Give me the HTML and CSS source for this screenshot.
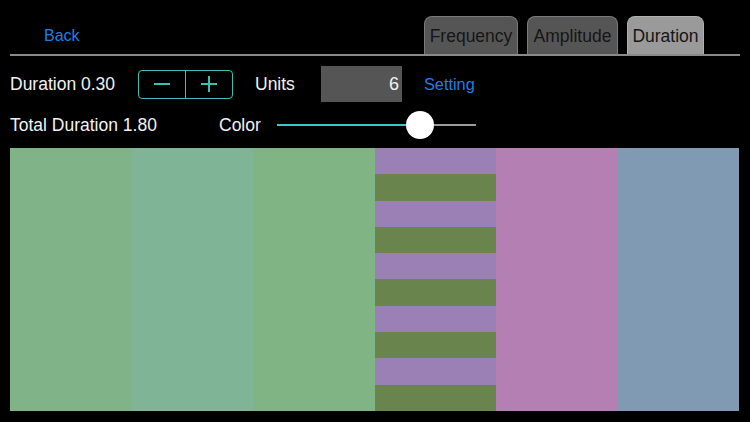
FILE: index.html
```html
<!DOCTYPE html>
<html>
<head>
<meta charset="utf-8">
<link rel="stylesheet" href="styles.css">
</head>
<body>
<div class="top">
  <a class="back">Back</a>
  <div class="tabs">
    <div class="tab tab-freq">Frequency</div>
    <div class="tab tab-amp">Amplitude</div>
    <div class="tab tab-dur active">Duration</div>
  </div>
</div>
<div class="row row1">
  <div class="label lbl-dur">Duration 0.30</div>
  <div class="stepper">
    <div class="step">
      <svg width="16" height="16" viewBox="0 0 16 16"><path d="M0 8H16" stroke="#3cc0b4" stroke-width="2"/></svg>
    </div>
    <div class="step step-r">
      <svg width="16" height="16" viewBox="0 0 16 16"><path d="M0 8H16M8 0V16" stroke="#3cc0b4" stroke-width="2"/></svg>
    </div>
  </div>
  <div class="label lbl-units">Units</div>
  <div class="input">6</div>
  <a class="setting">Setting</a>
</div>
<div class="row row2">
  <div class="label lbl-total">Total Duration 1.80</div>
  <div class="label lbl-color">Color</div>
  <div class="slider">
    <div class="track-on"></div>
    <div class="thumb"></div>
    <div class="track-off"></div>
  </div>
</div>
<div class="colors">
  <div class="col c1"></div>
  <div class="col c2"></div>
  <div class="col c3"></div>
  <div class="col c4">
    <div class="st p"></div><div class="st g"></div>
    <div class="st p"></div><div class="st g"></div>
    <div class="st p"></div><div class="st g"></div>
    <div class="st p"></div><div class="st g"></div>
    <div class="st p"></div><div class="st g"></div>
  </div>
  <div class="col c5"></div>
  <div class="col c6"></div>
</div>
</body>
</html>
```
FILE: styles.css
```css
html, body {
  margin: 0;
  padding: 0;
  background: #000;
  font-family: "Liberation Sans", Arial, sans-serif;
  color: #f2f2f2;
}
.top {
  display: flex;
  align-items: flex-end;
  margin: 0 10px;
  height: 54px;
  border-bottom: 2px solid #8a8a8a;
}
.back {
  margin-left: 34px;
  margin-bottom: 9px;
  font-size: 16px;
  line-height: 18px;
  color: #1f7ee6;
}
.tabs {
  margin-left: auto;
  margin-right: 36px;
  display: flex;
  gap: 9px;
}
.tab {
  height: 38px;
  box-sizing: border-box;
  background: #555;
  border: 1px solid #7a7a7a;
  border-bottom: none;
  border-radius: 8px 8px 0 0;
  font-size: 17.5px;
  color: #151515;
  display: flex;
  align-items: center;
  justify-content: center;
  padding-top: 2px;
}
.tab-freq { width: 94px; }
.tab-amp { width: 91px; }
.tab-dur { width: 77px; }
.tab.active {
  background: #9a9a9a;
  border-color: #b0b0b0;
}
.row {
  display: flex;
  align-items: center;
  padding-left: 10px;
}
.row1 {
  margin-top: 10px;
  height: 36px;
}
.row2 {
  margin-top: 8px;
  height: 30px;
}
.label {
  font-size: 17.5px;
  white-space: nowrap;
}
.lbl-dur { width: 128px; }
.stepper {
  width: 95px;
  height: 29px;
  box-sizing: border-box;
  border: 1px solid #3cc0b4;
  border-radius: 4px;
  display: flex;
}
.step {
  flex: 1;
  display: flex;
  align-items: center;
  justify-content: center;
}
.step-r {
  border-left: 1px solid #3cc0b4;
}
.lbl-units {
  margin-left: 22px;
  width: 66px;
}
.input {
  width: 81px;
  height: 36px;
  box-sizing: border-box;
  background: #555;
  font-size: 18px;
  text-align: right;
  padding-right: 3px;
  line-height: 36px;
  color: #f2f2f2;
}
.setting {
  margin-left: 22px;
  font-size: 16.3px;
  color: #1f7ee6;
}
.lbl-total { width: 209px; }
.lbl-color { width: 58px; }
.slider {
  width: 199px;
  height: 30px;
  display: flex;
  align-items: center;
}
.track-on {
  width: 129px;
  height: 2px;
  background: #3cc8c0;
}
.track-off {
  flex: 1;
  height: 2px;
  background: #9a9a9a;
}
.thumb {
  width: 28px;
  height: 28px;
  border-radius: 50%;
  background: #fff;
  flex: none;
}
.colors {
  margin: 8px 11px 0 10px;
  height: 263px;
  display: grid;
  grid-template-columns: repeat(6, 1fr);
}
.c1 { background: #80b488; }
.c2 { background: #80b496; }
.c3 { background: #80b484; }
.c4 {
  display: flex;
  flex-direction: column;
}
.st { flex: 1; }
.st.p { background: #9a80b4; }
.st.g { background: #6a844e; }
.c5 { background: #b480b4; }
.c6 { background: #809ab4; }
```
